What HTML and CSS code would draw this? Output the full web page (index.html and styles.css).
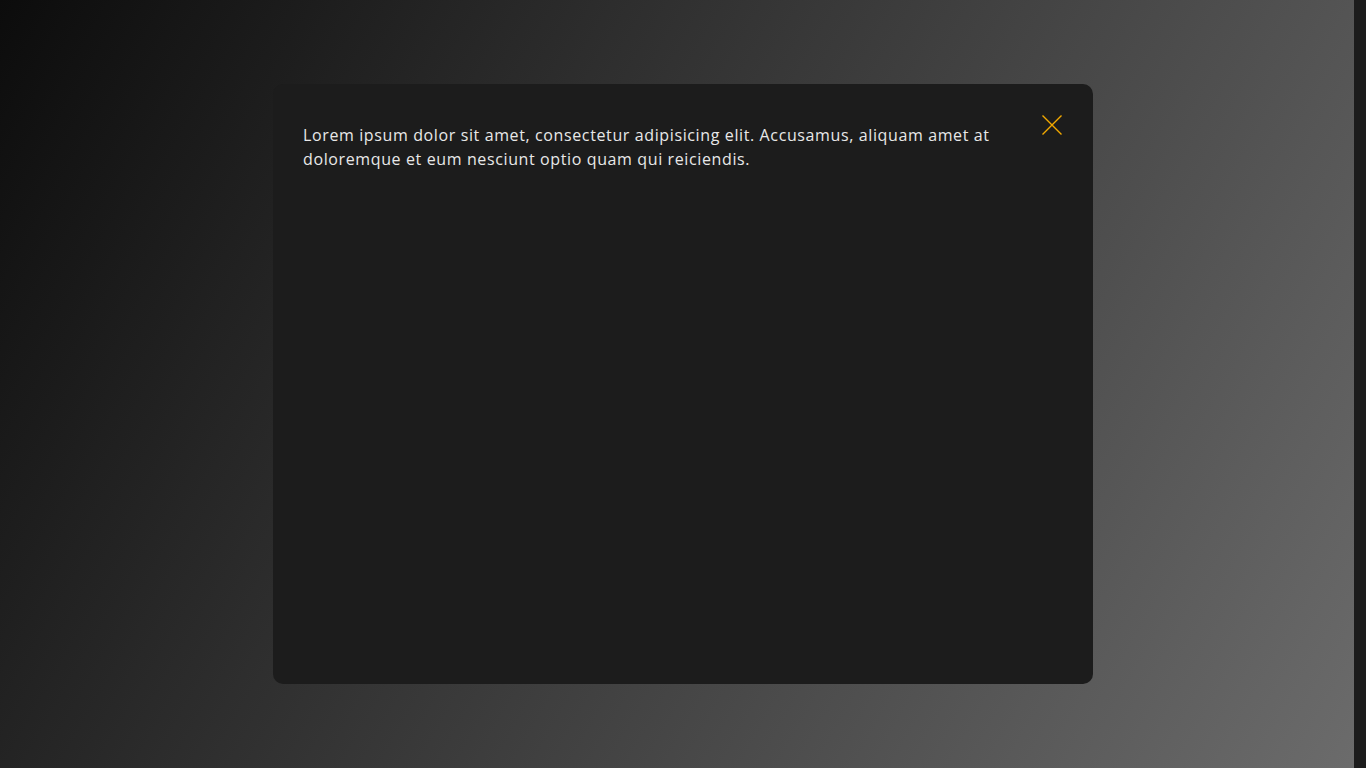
FILE: index.html
```html
<!DOCTYPE html>
<html lang="en">
<head>
<meta charset="utf-8">
<title>Modal</title>
<link rel="stylesheet" href="styles.css">
</head>
<body>
<div class="backdrop">
  <div class="modal">
    <p class="modal-text">Lorem ipsum dolor sit amet, consectetur adipisicing elit. Accusamus, aliquam amet at doloremque et eum nesciunt optio quam qui reiciendis.</p>
    <button class="close" aria-label="Close">
      <svg width="20" height="20" viewBox="0 0 20 20"><path d="M0.5 0.5 L19.5 19.5 M19.5 0.5 L0.5 19.5" stroke="#f2a900" stroke-width="1.4" fill="none"/></svg>
    </button>
  </div>
</div>
<div class="scroll-track"></div>
</body>
</html>
```
FILE: styles.css
```css
html, body {
  margin: 0;
  height: 100%;
}
body {
  background: linear-gradient(120deg, #0c0c0c 0%, #2e2e2e 35%, #6c6c6c 100%);
  font-family: "Open Sans", "DejaVu Sans", sans-serif;
  overflow: hidden;
}
.backdrop {
  height: 100%;
  display: flex;
  align-items: center;
  justify-content: center;
}
.modal {
  width: 820px;
  height: 600px;
  box-sizing: border-box;
  background: #1c1c1c;
  border-radius: 10px;
  padding: 31px 31px 30px 30px;
  display: flex;
  align-items: flex-start;
  gap: 40px;
}
.modal-text {
  margin: 0;
  flex: 1;
  color: #e8e8e8;
  font-size: 16px;
  line-height: 24px;
  padding-top: 8px;
  letter-spacing: 0.62px;
}
.close {
  background: none;
  border: 0;
  padding: 0;
  margin: 0;
  width: 20px;
  height: 20px;
  cursor: pointer;
  display: block;
}
.close svg { display: block; }
.scroll-track {
  position: fixed;
  top: 0;
  right: 0;
  width: 12px;
  height: 100%;
  background: #1c1c1c;
}
```
